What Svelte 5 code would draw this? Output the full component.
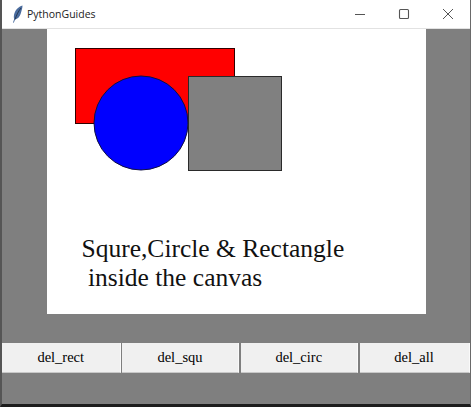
<script lang="ts">
  const buttons = ["del_rect", "del_squ", "del_circ", "del_all"];
</script>

<div class="window">
  <header class="titlebar">
    <svg class="feather" width="12" height="18" viewBox="0 0 12 18" aria-hidden="true">
      <path d="M10.5 0.5C6.5 1.5 3 5 2 10c-.3 1.6-.2 3 .2 4L1 17.5l.8.2 1.3-3.2c2.5-.5 4.5-2.5 5.500-5.500C9.500 6 10.500 3 10.500.5z" fill="#4a6c9e" />
      <path d="M9 3C6.500 6 4.500 10 3 14.500" stroke="#1d2b40" stroke-width="0.8" fill="none" />
    </svg>
    <span class="title">PythonGuides</span>
    <div class="controls">
      <svg width="12" height="12" viewBox="0 0 12 12" aria-hidden="true">
        <path d="M1 6.500h10" stroke="#555" stroke-width="1" />
      </svg>
      <svg width="12" height="12" viewBox="0 0 12 12" aria-hidden="true">
        <rect x="1.500" y="1.500" width="9" height="9" rx="1" stroke="#555" stroke-width="1.100" fill="none" />
      </svg>
      <svg width="12" height="12" viewBox="0 0 12 12" aria-hidden="true">
        <path d="M1 1l10 10M11 1L1 11" stroke="#555" stroke-width="1" />
      </svg>
    </div>
  </header>

  <main class="body">
    <svg class="canvas" width="379" height="285" viewBox="0 0 379 285">
      <rect x="28.500" y="19.500" width="159" height="75" fill="#ff0000" stroke="#300000" />
      <circle cx="94" cy="94" r="47" fill="#0000ff" stroke="#101040" />
      <rect x="141.500" y="47.500" width="93" height="94" fill="#808080" stroke="#2a2a2a" />
      <text x="34.500" y="228">Squre,Circle &amp; Rectangle</text>
      <text x="41" y="257">inside the canvas</text>
    </svg>

    <div class="buttons">
      {#each buttons as label}
        <button type="button">{label}</button>
      {/each}
    </div>
  </main>
</div>

<style>
  :global(body) {
    margin: 0;
    background: #fff;
  }

  .window {
    width: 471px;
    height: 407px;
    box-sizing: border-box;
    display: flex;
    flex-direction: column;
    overflow: hidden;
    border-left: 2px solid #555;
    border-right: 1px solid #6a6a6a;
    border-bottom: 3px solid #1c1c1c;
    background: #7f7f7f;
  }

  .titlebar {
    height: 29px;
    flex: none;
    box-sizing: border-box;
    display: flex;
    align-items: center;
    background: #fff;
    border-bottom: 1px solid #e2e2e2;
    padding-left: 10px;
    font-family: "Open Sans", "Noto Sans", sans-serif;
    font-size: 10.500px;
    color: #222;
  }

  .feather {
    margin-right: 3px;
  }

  .controls {
    margin-left: auto;
    display: flex;
    gap: 32px;
    padding-right: 16px;
  }

  .body {
    flex: 1;
    display: flex;
    flex-direction: column;
  }

  .canvas {
    display: block;
    background: #fff;
    margin-left: 45px;
  }

  .canvas text {
    font-family: "Liberation Serif", serif;
    font-size: 25.500px;
    fill: #111;
  }

  .buttons {
    margin-top: 29px;
    display: grid;
    grid-template-columns: 118.500px 117px 117.500px 1fr;
    gap: 1.500px;
    width: 467.500px;
    height: 30px;
  }

  button {
    font-family: "Liberation Serif", serif;
    font-size: 14.500px;
    color: #000;
    background: #f0f0f0;
    border: none;
    border-right: 1px solid #fafafa;
    border-bottom: 1px solid #c8c8c8;
    padding: 0;
  }
</style>
